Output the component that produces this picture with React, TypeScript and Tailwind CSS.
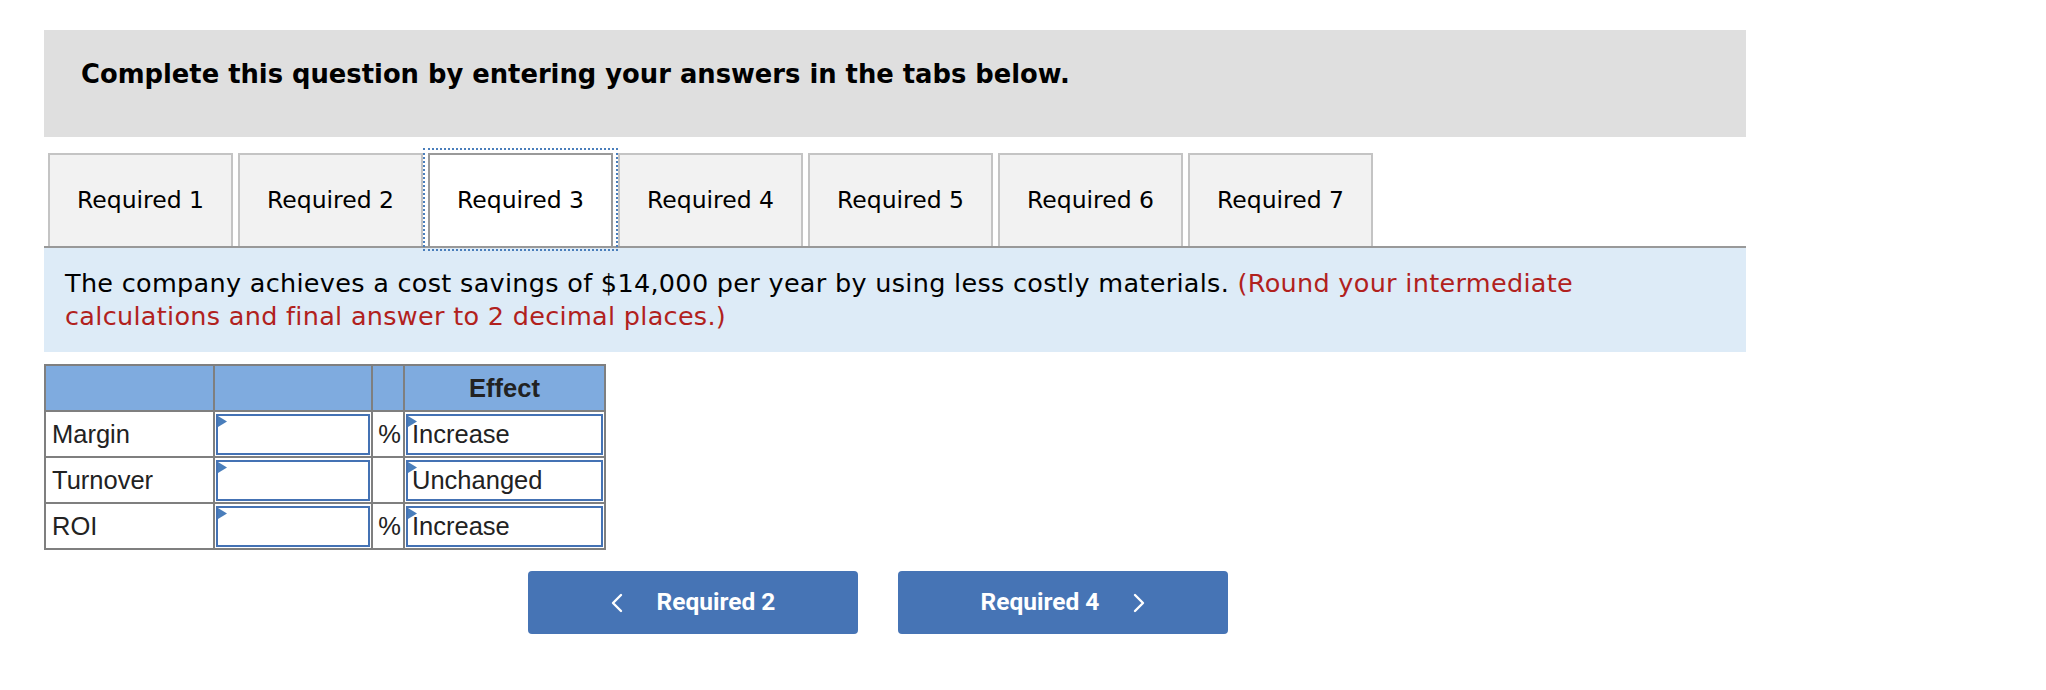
import React from 'react';

const tabs = ['Required 1', 'Required 2', 'Required 3', 'Required 4', 'Required 5', 'Required 6', 'Required 7'];

const rows = [
  { label: 'Margin', pct: true, effect: 'Increase' },
  { label: 'Turnover', pct: false, effect: 'Unchanged' },
  { label: 'ROI', pct: true, effect: 'Increase' },
];

const Marker = () => (
  <svg className="absolute left-0 top-0" width="9" height="11" viewBox="0 0 9 11">
    <polygon points="0,0 9,5.5 0,11" fill="#4a7ebb" />
  </svg>
);

const AnswerBox: React.FC<{ value?: string }> = ({ value }) => (
  <div className="relative h-[41px] border-2 border-[#4472b4] bg-white pl-[4px] flex items-center">
    <Marker />
    {value && <span>{value}</span>}
  </div>
);

const Chevron: React.FC<{ dir: 'left' | 'right' }> = ({ dir }) => (
  <svg width="12" height="20" viewBox="0 0 12 20" fill="none" stroke="white" strokeWidth="2.4" strokeLinecap="round" strokeLinejoin="round">
    {dir === 'left' ? <polyline points="10,2 2,10 10,18" /> : <polyline points="2,2 10,10 2,18" />}
  </svg>
);

export default function App() {
  return (
    <div className="w-[2046px] h-[690px] bg-white">
      <div className="pl-[44px] pt-[30px] w-[1746px]">
        <div className="h-[107px] bg-[#dfdfdf] pl-[37px] pt-[28px]">
          <h1 className="text-[25.8px] leading-[32px] font-bold text-black" style={{ fontFamily: '"DejaVu Sans", Verdana, sans-serif' }}>
            Complete this question by entering your answers in the tabs below.
          </h1>
        </div>

        <div className="mt-[16px] border-b-2 border-[#999999]" style={{ fontFamily: '"DejaVu Sans", Verdana, sans-serif' }}>
          <div className="flex gap-[5px] pl-[4px]">
            {tabs.map((t, i) =>
              i === 2 ? (
                <div
                  key={t}
                  className="w-[185px] h-[93px] flex items-center justify-center bg-white border-2 border-b-0 border-[#9a9a9a] outline-2 outline-dotted outline-[#4a7ebb] outline-offset-[3px] text-[23.5px] text-black"
                >
                  {t}
                </div>
              ) : (
                <div
                  key={t}
                  className="w-[185px] h-[93px] flex items-center justify-center bg-[#f2f2f2] border-2 border-b-0 border-[#c4c4c4] text-[23.5px] text-black"
                >
                  {t}
                </div>
              )
            )}
          </div>
        </div>

        <div className="bg-[#ddebf7] pl-[21px] pr-[30px] pt-[19px] pb-[18px] h-[104px]" style={{ fontFamily: '"DejaVu Sans", Verdana, sans-serif' }}>
          <p className="text-[25.5px] leading-[33px] tracking-[0.3px] text-black">
            The company achieves a cost savings of $14,000 per year by using less costly materials.{' '}
            <span className="text-[#b1211d]">
              (Round your intermediate
              <br />
              calculations and final answer to 2 decimal places.)
            </span>
          </p>
        </div>

        <table
          className="mt-[12px] border-collapse border-2 border-[#7f7f7f] text-[25.5px] text-[#222222]"
          style={{ fontFamily: '"Liberation Sans", Arial, sans-serif' }}
        >
          <thead>
            <tr className="bg-[#7fabdf] h-[46px]">
              <th className="w-[169px] border-2 border-[#7f7f7f]"></th>
              <th className="w-[158px] border-2 border-[#7f7f7f]"></th>
              <th className="w-[32px] border-2 border-[#7f7f7f]"></th>
              <th className="w-[201px] border-2 border-[#7f7f7f] font-bold text-center">Effect</th>
            </tr>
          </thead>
          <tbody>
            {rows.map((r) => (
              <tr key={r.label} className="h-[46px]">
                <td className="border-2 border-[#7f7f7f] pl-[6px] p-0">{r.label}</td>
                <td className="border-2 border-[#7f7f7f] p-[1px]">
                  <AnswerBox />
                </td>
                <td className="border-2 border-[#7f7f7f] p-0 text-right pr-[2px]">{r.pct ? '%' : ''}</td>
                <td className="border-2 border-[#7f7f7f] p-[1px]">
                  <AnswerBox value={r.effect} />
                </td>
              </tr>
            ))}
          </tbody>
        </table>

        <div className="mt-[21px] pl-[484px] flex gap-[40px]" style={{ fontFamily: 'Roboto, "Noto Sans", sans-serif' }}>
          <button className="w-[330px] h-[63px] rounded-[4px] bg-[#4674b5] text-white font-bold text-[24.5px] flex items-center justify-center gap-[34px]">
            <Chevron dir="left" />
            <span>Required 2</span>
          </button>
          <button className="w-[330px] h-[63px] rounded-[4px] bg-[#4674b5] text-white font-bold text-[24.5px] flex items-center justify-center gap-[34px]">
            <span>Required 4</span>
            <Chevron dir="right" />
          </button>
        </div>
      </div>
    </div>
  );
}
